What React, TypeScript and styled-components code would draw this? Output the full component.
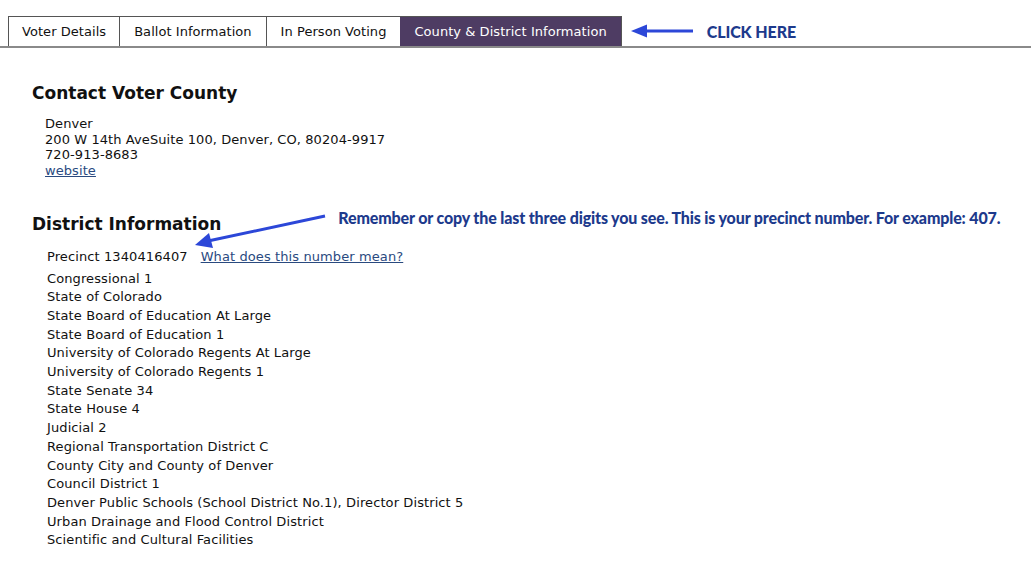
import { createGlobalStyle } from 'styled-components';
import styled from 'styled-components';

const GlobalStyle = createGlobalStyle`
  html, body {
    margin: 0;
    padding: 0;
    background: #fff;
  }
  body {
    font-family: 'DejaVu Sans', Verdana, sans-serif;
    color: #111;
    width: 1031px;
    height: 584px;
    overflow: hidden;
  }
`;

const TABS = ['Voter Details', 'Ballot Information', 'In Person Voting', 'County & District Information'];

const DISTRICTS = [
  'Congressional 1',
  'State of Colorado',
  'State Board of Education At Large',
  'State Board of Education 1',
  'University of Colorado Regents At Large',
  'University of Colorado Regents 1',
  'State Senate 34',
  'State House 4',
  'Judicial 2',
  'Regional Transportation District C',
  'County City and County of Denver',
  'Council District 1',
  'Denver Public Schools (School District No.1), Director District 5',
  'Urban Drainage and Flood Control District',
  'Scientific and Cultural Facilities',
];

const Page = styled.div`
  position: relative;
  padding-top: 16px;
`;

const TabBar = styled.div`
  display: flex;
  align-items: stretch;
  padding-left: 8px;
  border-bottom: 2px solid #8a8a8a;
  height: 30px;
`;

const Tab = styled.div<{ $active?: boolean }>`
  display: flex;
  align-items: center;
  padding: 0 14px;
  font-size: 13px;
  letter-spacing: 0.05px;
  border: 1px solid #555;
  border-bottom: none;
  border-left: ${({ $active }) => ($active ? 'none' : '1px solid #555')};
  margin-left: -1px;
  background: ${({ $active }) => ($active ? '#4e3c63' : '#fff')};
  color: ${({ $active }) => ($active ? '#fff' : '#111')};
  &:first-child {
    margin-left: 0;
    padding: 0 13px;
  }
`;

const Callout = styled.div`
  display: flex;
  align-items: center;
  margin-left: 9px;
  gap: 14px;
`;

const CalloutText = styled.span`
  font-family: Lato, 'Open Sans', sans-serif;
  font-weight: 900;
  font-size: 16px;
  color: #1d3a8c;
  letter-spacing: -0.1px;
`;

const Content = styled.div`
  padding-left: 32px;
`;

const Heading = styled.h2`
  margin: 0;
  font-size: 17px;
  font-weight: bold;
  color: #111;
`;

const ContactHeading = styled(Heading)`
  margin-top: 35px;
`;

const Address = styled.div`
  margin-top: 13px;
  padding-left: 13px;
  font-size: 13px;
  line-height: 15.7px;
  letter-spacing: 0.08px;
`;

const Link = styled.a`
  color: #2a4a7f;
  text-decoration: underline;
`;

const DistrictHeader = styled.div`
  display: flex;
  align-items: flex-start;
  margin-top: 35px;
  height: 22px;
`;

const NoteArrow = styled.svg`
  position: absolute;
  left: 190px;
  top: 210px;
`;

const NoteText = styled.span`
  font-family: Lato, 'Open Sans', sans-serif;
  font-weight: 900;
  font-size: 16px;
  color: #1d3a8c;
  margin-left: 117px;
  margin-top: -6px;
  letter-spacing: -0.15px;
  white-space: nowrap;
`;

const DistrictList = styled.ul`
  list-style: none;
  margin: 12px 0 0;
  padding-left: 15px;
  font-size: 13px;
  letter-spacing: 0.1px;
`;

const DistrictItem = styled.li`
  line-height: 18.7px;
`;

const PrecinctItem = styled(DistrictItem)`
  margin-bottom: 3px;
`;

const PrecinctLink = styled(Link)`
  margin-left: 13px;
`;

export default function App() {
  return (
    <Page>
      <GlobalStyle />
      <TabBar>
        {TABS.map((t, i) => (
          <Tab key={t} $active={i === TABS.length - 1}>
            {t}
          </Tab>
        ))}
        <Callout>
          <svg width="62" height="16" viewBox="0 0 62 16">
            <line x1="14" y1="8" x2="62" y2="8" stroke="#2c47d8" strokeWidth="3" />
            <polygon points="0,8 16,1.5 16,14.5" fill="#2c47d8" />
          </svg>
          <CalloutText>CLICK HERE</CalloutText>
        </Callout>
      </TabBar>
      <Content>
        <ContactHeading>Contact Voter County</ContactHeading>
        <Address>
          <div>Denver</div>
          <div>200 W 14th AveSuite 100, Denver, CO, 80204-9917</div>
          <div>720-913-8683</div>
          <div>
            <Link href="#">website</Link>
          </div>
        </Address>
        <DistrictHeader>
          <Heading>District Information</Heading>
          <NoteText>
            Remember or copy the last three digits you see. This is your precinct number. For example: 407.
          </NoteText>
        </DistrictHeader>
        <NoteArrow width="140" height="42" viewBox="0 0 140 42">
          <line x1="135" y1="6" x2="18" y2="31" stroke="#2c47d8" strokeWidth="3" />
          <polygon points="5,35 19,23 23,38" fill="#2c47d8" />
        </NoteArrow>
        <DistrictList>
          <PrecinctItem>
            Precinct 1340416407
            <PrecinctLink href="#">What does this number mean?</PrecinctLink>
          </PrecinctItem>
          {DISTRICTS.map((d) => (
            <DistrictItem key={d}>{d}</DistrictItem>
          ))}
        </DistrictList>
      </Content>
    </Page>
  );
}
